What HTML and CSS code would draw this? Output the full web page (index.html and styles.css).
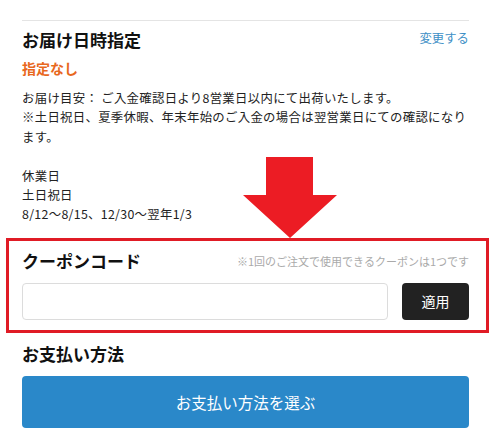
FILE: index.html
```html
<!DOCTYPE html>
<html lang="ja">
<head>
<meta charset="utf-8">
<link rel="stylesheet" href="styles.css">
</head>
<body>
<div class="page">
  <hr class="divider">
  <section class="delivery">
    <div class="head-row">
      <h2 class="title">お届け日時指定</h2>
      <a class="change">変更する</a>
    </div>
    <p class="status">指定なし</p>
    <p class="body">お届け目安： ご入金確認日より8営業日以内にて出荷いたします。<br>※土日祝日、夏季休暇、年末年始のご入金の場合は翌営業日にての確認になり<br>ます。</p>
    <p class="body holidays">休業日<br>土日祝日<br>8/12～8/15、12/30～翌年1/3</p>
  </section>

  <section class="coupon">
    <div class="head-row">
      <h2 class="title">クーポンコード</h2>
      <span class="note">※1回のご注文で使用できるクーポンは1つです</span>
    </div>
    <div class="coupon-row">
      <input class="coupon-input" type="text">
      <button class="apply">適用</button>
    </div>
  </section>

  <section class="payment">
    <h2 class="title">お支払い方法</h2>
    <button class="pay-btn">お支払い方法を選ぶ</button>
  </section>

  <svg class="arrow" width="94" height="81" viewBox="0 0 94 81">
    <polygon points="23,0 70,0 70,38 94,38 47,81 0,38 23,38" fill="#ec1c24"/>
  </svg>
</div>
</body>
</html>
```

FILE: styles.css
```css
* { box-sizing: border-box; }
html, body { margin: 0; padding: 0; background: #fff; }
body {
  font-family: "Noto Sans CJK JP", "Noto Sans", sans-serif;
  color: #222;
}
.page {
  position: relative;
  width: 500px;
  padding: 20px 0 0 22px;
}
.divider {
  width: 447px;
  margin: 0;
  border: 0;
  border-top: 1px solid #e4e4e4;
}
.head-row {
  display: flex;
  justify-content: space-between;
  align-items: center;
  width: 447px;
}
.title {
  margin: 0;
  font-size: 17px;
  line-height: 24px;
  font-weight: bold;
  color: #111;
}
.delivery .head-row { margin-top: 7px; }
.change {
  font-size: 12.4px;
  line-height: 20px;
  color: #3d8fc6;
  margin-top: -4px;
}
.status {
  margin: 6px 0 0;
  font-size: 14px;
  line-height: 21px;
  font-weight: bold;
  color: #e8681e;
}
.body {
  margin: 10px 0 0;
  width: 470px;
  font-size: 12.4px;
  line-height: 19.4px;
  letter-spacing: 0.3px;
  color: #222;
}
.holidays { margin-top: 19.4px; }

.coupon {
  margin: 13px 0 0 -16px;
  width: 483px;
  border: 3px solid #e01b25;
  padding: 8px 17px 10px 13px;
}
.note {
  font-size: 11px;
  color: #aaa;
  line-height: 20px;
}
.coupon-row {
  display: flex;
  justify-content: space-between;
  margin-top: 10px;
}
.coupon-input {
  width: 366px;
  height: 37px;
  border: 1px solid #dcdcdc;
  border-radius: 4px;
  background: #fff;
  margin: 0;
}
.apply {
  width: 67px;
  height: 37px;
  border: 0;
  border-radius: 4px;
  background: #222;
  color: #fff;
  font-family: inherit;
  font-size: 14px;
  padding: 0;
}
.payment { margin-top: 9px; }
.pay-btn {
  display: block;
  margin-top: 10px;
  width: 447px;
  height: 52px;
  border: 0;
  border-radius: 4px;
  background: #2a88c9;
  color: #fff;
  font-family: inherit;
  font-size: 15.5px;
  padding: 0;
}
.arrow {
  position: absolute;
  left: 243px;
  top: 157px;
}
```
